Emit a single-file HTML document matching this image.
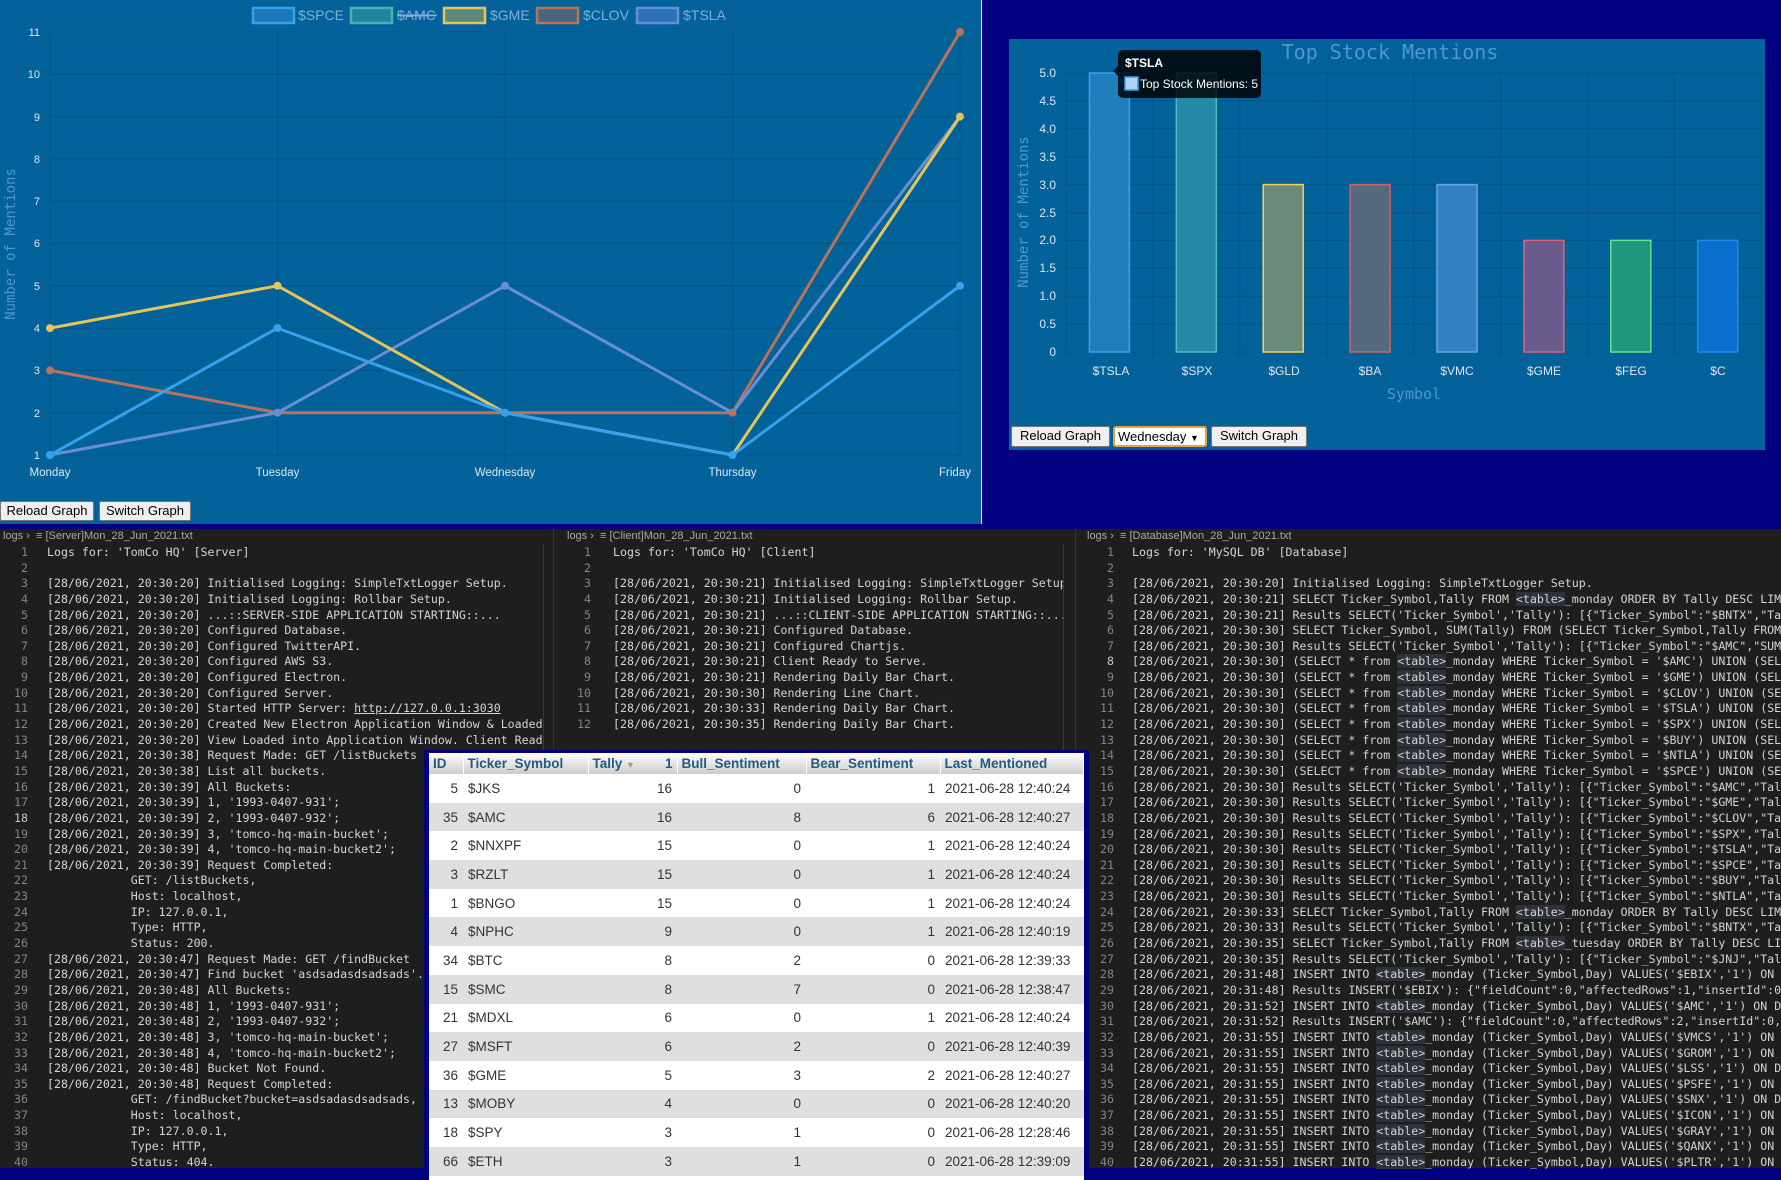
<!DOCTYPE html>
<html><head><meta charset="utf-8">
<style>
*{margin:0;padding:0;box-sizing:border-box}
body{width:1781px;height:1168px;overflow:hidden;background:#000080;position:relative;font-family:"Liberation Sans",sans-serif}
.abs{position:absolute}
.btn{position:absolute;background:#efefef;border:1px solid #767676;border-radius:2px;font:13px "Liberation Sans",sans-serif;color:#000;text-align:center;line-height:18px}
.logs{position:absolute;top:529px;height:639px;background:#1e1e1e;overflow:hidden}
.bc{position:absolute;top:530px;font:11px "Liberation Sans",sans-serif;color:#a9a9a9;white-space:pre}
.gut,.txt{position:absolute;top:545px;font:11.6px "DejaVu Sans Mono",monospace;line-height:15.64px;white-space:pre}
.gut{color:#858585;text-align:right}
.txt{color:#d4d4d4;overflow:hidden}
.tb{background:#2c313a}
table{border-collapse:collapse;font:13.5px "Liberation Sans",sans-serif;color:#333;width:100%}
th{color:#235a81;font-weight:bold;text-align:left;height:21px;padding:0 4px;background:linear-gradient(#fff,#ccc);border-right:1px solid #fff}
td{height:28.7px;padding:0 5px}
tr:nth-child(odd) td{background:#dfdfdf}
tr:nth-child(even) td{background:#fff}
.r{text-align:right}
</style></head><body>

<!-- line chart panel -->
<div class="abs" style="left:0;top:0;width:982px;height:524px;background:#03629a;border-right:1px solid #cfe3f3"></div>
<svg class="abs" style="left:0;top:0" width="1781" height="528" font-family="Liberation Sans, sans-serif">
 <g stroke="rgba(0,0,0,0.13)" stroke-width="1">
  <line x1="50" y1="455" x2="960" y2="455"/><line x1="50" y1="412.7" x2="960" y2="412.7"/><line x1="50" y1="370.4" x2="960" y2="370.4"/><line x1="50" y1="328.1" x2="960" y2="328.1"/><line x1="50" y1="285.8" x2="960" y2="285.8"/><line x1="50" y1="243.5" x2="960" y2="243.5"/><line x1="50" y1="201.2" x2="960" y2="201.2"/><line x1="50" y1="158.9" x2="960" y2="158.9"/><line x1="50" y1="116.6" x2="960" y2="116.6"/><line x1="50" y1="74.3" x2="960" y2="74.3"/><line x1="50" y1="32" x2="960" y2="32"/>
  <line x1="50" y1="32" x2="50" y2="462"/><line x1="277.5" y1="32" x2="277.5" y2="462"/><line x1="505" y1="32" x2="505" y2="462"/><line x1="732.5" y1="32" x2="732.5" y2="462"/><line x1="960" y1="32" x2="960" y2="462"/>
 </g>
 <g fill="#dde6ee" font-size="11" text-anchor="end">
  <text x="40" y="459">1</text><text x="40" y="417">2</text><text x="40" y="374">3</text><text x="40" y="332">4</text><text x="40" y="290">5</text><text x="40" y="247">6</text><text x="40" y="205">7</text><text x="40" y="163">8</text><text x="40" y="121">9</text><text x="40" y="78">10</text><text x="40" y="36">11</text>
 </g>
 <g fill="#dde6ee" font-size="11.5" text-anchor="middle">
  <text x="50" y="476">Monday</text><text x="277.5" y="476">Tuesday</text><text x="505" y="476">Wednesday</text><text x="732.5" y="476">Thursday</text><text x="955" y="476">Friday</text>
 </g>
 <text transform="translate(15,244) rotate(-90)" text-anchor="middle" fill="#4f97cc" font-size="14" font-family="DejaVu Sans Mono, monospace">Number of Mentions</text>
 <!-- legend -->
 <g font-size="14" fill="#7fb0d4">
  <rect x="253" y="8" width="41" height="15" fill="#1d78b8" stroke="#36a2eb" stroke-width="2.5"/><text x="298" y="20">$SPCE</text>
  <rect x="351" y="8" width="41" height="15" fill="#1e849f" stroke="#4bb0b0" stroke-width="2.5"/><text x="397" y="20" text-decoration="line-through">$AMC</text>
  <line x1="397" y1="15" x2="437" y2="15" stroke="#7fb0d4"/>
  <rect x="444" y="8" width="41" height="15" fill="#60887a" stroke="#e6c45a" stroke-width="2.5"/><text x="490" y="20">$GME</text>
  <rect x="537" y="8" width="41" height="15" fill="#4a6479" stroke="#b8735a" stroke-width="2.5"/><text x="583" y="20">$CLOV</text>
  <rect x="637" y="8" width="41" height="15" fill="#2a72b8" stroke="#6a8ed0" stroke-width="2.5"/><text x="683" y="20">$TSLA</text>
 </g>
 <!-- series -->
 <g fill="none" stroke-width="3">
  <polyline stroke="#b8735a" points="50,370.4 277.5,412.7 505,412.7 732.5,412.7 960,32"/>
  <polyline stroke="#6a8ed0" points="50,455 277.5,412.7 505,285.8 732.5,412.7 960,116.6"/>
  <polyline stroke="#e6c45a" points="50,328.1 277.5,285.8 505,412.7 732.5,455 960,116.6"/>
  <polyline stroke="#36a2eb" points="50,455 277.5,328.1 505,412.7 732.5,455 960,285.8"/>
 </g>
 <g stroke-width="2">
  <g fill="#b8735a" stroke="#b8735a"><circle cx="50" cy="370.4" r="3"/><circle cx="277.5" cy="412.7" r="3"/><circle cx="505" cy="412.7" r="3"/><circle cx="732.5" cy="412.7" r="3"/><circle cx="960" cy="32" r="3"/></g>
  <g fill="#6a8ed0" stroke="#6a8ed0"><circle cx="277.5" cy="412.7" r="3"/><circle cx="505" cy="285.8" r="3"/></g>
  <g fill="#e6c45a" stroke="#e6c45a"><circle cx="50" cy="328.1" r="3"/><circle cx="277.5" cy="285.8" r="3"/><circle cx="960" cy="116.6" r="3"/></g>
  <g fill="#36a2eb" stroke="#36a2eb"><circle cx="50" cy="455" r="3"/><circle cx="277.5" cy="328.1" r="3"/><circle cx="505" cy="412.7" r="3"/><circle cx="732.5" cy="455" r="3"/><circle cx="960" cy="285.8" r="3"/></g>
 </g>

 <!-- bar chart panel -->
 <rect x="1009" y="39" width="756" height="411" fill="#03629a"/>
 <g stroke="rgba(0,0,0,0.13)">
  <line x1="1066" y1="73" x2="1761" y2="73"/><line x1="1066" y1="100.9" x2="1761" y2="100.9"/><line x1="1066" y1="128.8" x2="1761" y2="128.8"/><line x1="1066" y1="156.7" x2="1761" y2="156.7"/><line x1="1066" y1="184.6" x2="1761" y2="184.6"/><line x1="1066" y1="212.5" x2="1761" y2="212.5"/><line x1="1066" y1="240.4" x2="1761" y2="240.4"/><line x1="1066" y1="268.3" x2="1761" y2="268.3"/><line x1="1066" y1="296.2" x2="1761" y2="296.2"/><line x1="1066" y1="324.1" x2="1761" y2="324.1"/><line x1="1066" y1="352" x2="1761" y2="352"/>
  <line x1="1066" y1="73" x2="1066" y2="358"/><line x1="1152.9" y1="73" x2="1152.9" y2="358"/><line x1="1239.8" y1="73" x2="1239.8" y2="358"/><line x1="1326.7" y1="73" x2="1326.7" y2="358"/><line x1="1413.6" y1="73" x2="1413.6" y2="358"/><line x1="1500.5" y1="73" x2="1500.5" y2="358"/><line x1="1587.4" y1="73" x2="1587.4" y2="358"/><line x1="1674.3" y1="73" x2="1674.3" y2="358"/><line x1="1761" y1="73" x2="1761" y2="358"/>
 </g>
 <g stroke-width="1.5">
  <rect x="1089.4" y="73" width="40" height="279" fill="#1f7fbd" stroke="#36a2eb"/>
  <rect x="1176.3" y="73" width="40" height="279" fill="#248aa6" stroke="#4bc0c0"/>
  <rect x="1263.2" y="184.6" width="40" height="167.4" fill="#6a8a7b" stroke="#ffcd56"/>
  <rect x="1350.1" y="184.6" width="40" height="167.4" fill="#556a7f" stroke="#c9665f"/>
  <rect x="1437" y="184.6" width="40" height="167.4" fill="#3580c0" stroke="#6aa4e4"/>
  <rect x="1523.9" y="240.4" width="40" height="111.6" fill="#6a5b8d" stroke="#e4607c"/>
  <rect x="1610.8" y="240.4" width="40" height="111.6" fill="#21967e" stroke="#62e28e"/>
  <rect x="1697.7" y="240.4" width="40" height="111.6" fill="#0a6ecc" stroke="#1e8cf0"/>
 </g>
 <g fill="#dde6ee" font-size="12" text-anchor="end">
  <text x="1056" y="77">5.0</text><text x="1056" y="105">4.5</text><text x="1056" y="133">4.0</text><text x="1056" y="161">3.5</text><text x="1056" y="189">3.0</text><text x="1056" y="217">2.5</text><text x="1056" y="244">2.0</text><text x="1056" y="272">1.5</text><text x="1056" y="300">1.0</text><text x="1056" y="328">0.5</text><text x="1056" y="356">0</text>
 </g>
 <g fill="#dde6ee" font-size="12" text-anchor="middle">
  <text x="1111" y="375">$TSLA</text><text x="1197" y="375">$SPX</text><text x="1284" y="375">$GLD</text><text x="1370" y="375">$BA</text><text x="1457" y="375">$VMC</text><text x="1544" y="375">$GME</text><text x="1631" y="375">$FEG</text><text x="1718" y="375">$C</text>
 </g>
 <text x="1414" y="399" text-anchor="middle" fill="#4f97cc" font-size="15" font-family="DejaVu Sans Mono, monospace">Symbol</text>
 <text transform="translate(1028,212) rotate(-90)" text-anchor="middle" fill="#4f97cc" font-size="14" font-family="DejaVu Sans Mono, monospace">Number of Mentions</text>
 <text x="1390" y="59" text-anchor="middle" fill="#4f97cc" font-size="20" font-family="DejaVu Sans Mono, monospace">Top Stock Mentions</text>
 <!-- tooltip -->
 <rect x="1118" y="50" width="143" height="48" rx="5" fill="rgba(0,0,0,0.82)"/>
 <path d="M1118,66 l-5,5 l5,5z" fill="rgba(0,0,0,0.82)"/>
 <text x="1125" y="67" fill="#fff" font-size="12" font-weight="bold">$TSLA</text>
 <rect x="1125" y="77" width="13" height="13" fill="#a8d6f4" stroke="#36a2eb" stroke-width="1.5"/>
 <text x="1140" y="88" fill="#fff" font-size="12">Top Stock Mentions: 5</text>
</svg>

<div class="btn" style="left:0;top:501px;width:94px;height:20px">Reload Graph</div>
<div class="btn" style="left:99px;top:501px;width:92px;height:20px">Switch Graph</div>
<div class="btn" style="left:1011px;top:426px;width:99px;height:21px">Reload Graph</div>
<div class="btn" style="left:1113px;top:426px;width:94px;height:21px;background:#fff;border:2px solid #e8a33a;border-radius:3px;text-align:left;padding-left:3px;line-height:17px">Wednesday <span style="font-size:9px">&#9660;</span></div>
<div class="btn" style="left:1211px;top:426px;width:96px;height:21px">Switch Graph</div>

<!-- logs -->
<div class="logs" style="left:0;width:553px"></div>
<div class="logs" style="left:553px;width:522px;border-left:1px solid #333"></div>
<div class="logs" style="left:1075px;width:706px;border-left:1px solid #333"></div>
<div class="abs" style="left:543px;top:545px;width:1px;height:623px;background:#3a3a3a"></div>
<div class="abs" style="left:1063px;top:545px;width:1px;height:623px;background:#3a3a3a"></div>

<div class="bc" style="left:3px">logs ›  ≡ [Server]Mon_28_Jun_2021.txt</div>
<div class="bc" style="left:567px">logs ›  ≡ [Client]Mon_28_Jun_2021.txt</div>
<div class="bc" style="left:1087px">logs ›  ≡ [Database]Mon_28_Jun_2021.txt</div>

<div class="gut" style="left:0;width:28px">1
2
3
4
5
6
7
8
9
10
11
12
13
14
15
16
17
<span style="color:#c6c6c6">18</span>
19
20
21
22
23
24
25
26
27
28
29
30
31
32
33
34
35
36
37
38
39
40</div>
<div class="txt" style="left:47px;width:496px">Logs for: 'TomCo HQ' [Server]

[28/06/2021, 20:30:20] Initialised Logging: SimpleTxtLogger Setup.
[28/06/2021, 20:30:20] Initialised Logging: Rollbar Setup.
[28/06/2021, 20:30:20] ...::SERVER-SIDE APPLICATION STARTING::...
[28/06/2021, 20:30:20] Configured Database.
[28/06/2021, 20:30:20] Configured TwitterAPI.
[28/06/2021, 20:30:20] Configured AWS S3.
[28/06/2021, 20:30:20] Configured Electron.
[28/06/2021, 20:30:20] Configured Server.
[28/06/2021, 20:30:20] Started HTTP Server: <u>http://127.0.0.1:3030</u>
[28/06/2021, 20:30:20] Created New Electron Application Window &amp; Loaded Scripts.
[28/06/2021, 20:30:20] View Loaded into Application Window. Client Ready.
[28/06/2021, 20:30:38] Request Made: GET /listBuckets
[28/06/2021, 20:30:38] List all buckets.
[28/06/2021, 20:30:39] All Buckets:
[28/06/2021, 20:30:39] 1, '1993-0407-931';
[28/06/2021, 20:30:39] 2, '1993-0407-932';
[28/06/2021, 20:30:39] 3, 'tomco-hq-main-bucket';
[28/06/2021, 20:30:39] 4, 'tomco-hq-main-bucket2';
[28/06/2021, 20:30:39] Request Completed:
            GET: /listBuckets,
            Host: localhost,
            IP: 127.0.0.1,
            Type: HTTP,
            Status: 200.
[28/06/2021, 20:30:47] Request Made: GET /findBucket
[28/06/2021, 20:30:47] Find bucket 'asdsadasdsadsads'.
[28/06/2021, 20:30:48] All Buckets:
[28/06/2021, 20:30:48] 1, '1993-0407-931';
[28/06/2021, 20:30:48] 2, '1993-0407-932';
[28/06/2021, 20:30:48] 3, 'tomco-hq-main-bucket';
[28/06/2021, 20:30:48] 4, 'tomco-hq-main-bucket2';
[28/06/2021, 20:30:48] Bucket Not Found.
[28/06/2021, 20:30:48] Request Completed:
            GET: /findBucket?bucket=asdsadasdsadsads,
            Host: localhost,
            IP: 127.0.0.1,
            Type: HTTP,
            Status: 404.</div>

<div class="gut" style="left:553px;width:38px">1
2
3
4
5
6
7
8
9
10
11
12</div>
<div class="txt" style="left:613px;width:450px">Logs for: 'TomCo HQ' [Client]

[28/06/2021, 20:30:21] Initialised Logging: SimpleTxtLogger Setup.
[28/06/2021, 20:30:21] Initialised Logging: Rollbar Setup.
[28/06/2021, 20:30:21] ...::CLIENT-SIDE APPLICATION STARTING::...
[28/06/2021, 20:30:21] Configured Database.
[28/06/2021, 20:30:21] Configured Chartjs.
[28/06/2021, 20:30:21] Client Ready to Serve.
[28/06/2021, 20:30:21] Rendering Daily Bar Chart.
[28/06/2021, 20:30:30] Rendering Line Chart.
[28/06/2021, 20:30:33] Rendering Daily Bar Chart.
[28/06/2021, 20:30:35] Rendering Daily Bar Chart.</div>

<div class="gut" style="left:1075px;width:39px">1
2
3
4
5
6
7
<span style="color:#c6c6c6">8</span>
9
10
11
12
13
14
15
16
17
18
19
20
21
22
23
24
25
26
27
28
29
30
31
32
33
34
35
36
37
38
39
40</div>
<div class="txt" style="left:1132px;width:649px">Logs for: 'MySQL DB' [Database]

[28/06/2021, 20:30:20] Initialised Logging: SimpleTxtLogger Setup.
[28/06/2021, 20:30:21] SELECT Ticker_Symbol,Tally FROM <span class="tb">&lt;table&gt;</span>_monday ORDER BY Tally DESC LIMIT 8
[28/06/2021, 20:30:21] Results SELECT('Ticker_Symbol','Tally'): [{"Ticker_Symbol":"$BNTX","Tally":5}]
[28/06/2021, 20:30:30] SELECT Ticker_Symbol, SUM(Tally) FROM (SELECT Ticker_Symbol,Tally FROM
[28/06/2021, 20:30:30] Results SELECT('Ticker_Symbol','Tally'): [{"Ticker_Symbol":"$AMC","SUM"
[28/06/2021, 20:30:30] (SELECT * from <span class="tb">&lt;table&gt;</span>_monday WHERE Ticker_Symbol = '$AMC') UNION (SELECT
[28/06/2021, 20:30:30] (SELECT * from <span class="tb">&lt;table&gt;</span>_monday WHERE Ticker_Symbol = '$GME') UNION (SELECT
[28/06/2021, 20:30:30] (SELECT * from <span class="tb">&lt;table&gt;</span>_monday WHERE Ticker_Symbol = '$CLOV') UNION (SELECT
[28/06/2021, 20:30:30] (SELECT * from <span class="tb">&lt;table&gt;</span>_monday WHERE Ticker_Symbol = '$TSLA') UNION (SELECT
[28/06/2021, 20:30:30] (SELECT * from <span class="tb">&lt;table&gt;</span>_monday WHERE Ticker_Symbol = '$SPX') UNION (SELECT
[28/06/2021, 20:30:30] (SELECT * from <span class="tb">&lt;table&gt;</span>_monday WHERE Ticker_Symbol = '$BUY') UNION (SELECT
[28/06/2021, 20:30:30] (SELECT * from <span class="tb">&lt;table&gt;</span>_monday WHERE Ticker_Symbol = '$NTLA') UNION (SELECT
[28/06/2021, 20:30:30] (SELECT * from <span class="tb">&lt;table&gt;</span>_monday WHERE Ticker_Symbol = '$SPCE') UNION (SELECT
[28/06/2021, 20:30:30] Results SELECT('Ticker_Symbol','Tally'): [{"Ticker_Symbol":"$AMC","Tally"
[28/06/2021, 20:30:30] Results SELECT('Ticker_Symbol','Tally'): [{"Ticker_Symbol":"$GME","Tally"
[28/06/2021, 20:30:30] Results SELECT('Ticker_Symbol','Tally'): [{"Ticker_Symbol":"$CLOV","Tally"
[28/06/2021, 20:30:30] Results SELECT('Ticker_Symbol','Tally'): [{"Ticker_Symbol":"$SPX","Tally"
[28/06/2021, 20:30:30] Results SELECT('Ticker_Symbol','Tally'): [{"Ticker_Symbol":"$TSLA","Tally"
[28/06/2021, 20:30:30] Results SELECT('Ticker_Symbol','Tally'): [{"Ticker_Symbol":"$SPCE","Tally"
[28/06/2021, 20:30:30] Results SELECT('Ticker_Symbol','Tally'): [{"Ticker_Symbol":"$BUY","Tally"
[28/06/2021, 20:30:30] Results SELECT('Ticker_Symbol','Tally'): [{"Ticker_Symbol":"$NTLA","Tally"
[28/06/2021, 20:30:33] SELECT Ticker_Symbol,Tally FROM <span class="tb">&lt;table&gt;</span>_monday ORDER BY Tally DESC LIMIT 8
[28/06/2021, 20:30:33] Results SELECT('Ticker_Symbol','Tally'): [{"Ticker_Symbol":"$BNTX","Tally"
[28/06/2021, 20:30:35] SELECT Ticker_Symbol,Tally FROM <span class="tb">&lt;table&gt;</span>_tuesday ORDER BY Tally DESC LIMIT
[28/06/2021, 20:30:35] Results SELECT('Ticker_Symbol','Tally'): [{"Ticker_Symbol":"$JNJ","Tally"
[28/06/2021, 20:31:48] INSERT INTO <span class="tb">&lt;table&gt;</span>_monday (Ticker_Symbol,Day) VALUES('$EBIX','1') ON DUP
[28/06/2021, 20:31:48] Results INSERT('$EBIX'): {"fieldCount":0,"affectedRows":1,"insertId":0,
[28/06/2021, 20:31:52] INSERT INTO <span class="tb">&lt;table&gt;</span>_monday (Ticker_Symbol,Day) VALUES('$AMC','1') ON DUP
[28/06/2021, 20:31:52] Results INSERT('$AMC'): {"fieldCount":0,"affectedRows":2,"insertId":0,
[28/06/2021, 20:31:55] INSERT INTO <span class="tb">&lt;table&gt;</span>_monday (Ticker_Symbol,Day) VALUES('$VMCS','1') ON DUP
[28/06/2021, 20:31:55] INSERT INTO <span class="tb">&lt;table&gt;</span>_monday (Ticker_Symbol,Day) VALUES('$GROM','1') ON DUP
[28/06/2021, 20:31:55] INSERT INTO <span class="tb">&lt;table&gt;</span>_monday (Ticker_Symbol,Day) VALUES('$LSS','1') ON DUP
[28/06/2021, 20:31:55] INSERT INTO <span class="tb">&lt;table&gt;</span>_monday (Ticker_Symbol,Day) VALUES('$PSFE','1') ON DUP
[28/06/2021, 20:31:55] INSERT INTO <span class="tb">&lt;table&gt;</span>_monday (Ticker_Symbol,Day) VALUES('$SNX','1') ON DUP
[28/06/2021, 20:31:55] INSERT INTO <span class="tb">&lt;table&gt;</span>_monday (Ticker_Symbol,Day) VALUES('$ICON','1') ON DUP
[28/06/2021, 20:31:55] INSERT INTO <span class="tb">&lt;table&gt;</span>_monday (Ticker_Symbol,Day) VALUES('$GRAY','1') ON DUP
[28/06/2021, 20:31:55] INSERT INTO <span class="tb">&lt;table&gt;</span>_monday (Ticker_Symbol,Day) VALUES('$QANX','1') ON DUP
[28/06/2021, 20:31:55] INSERT INTO <span class="tb">&lt;table&gt;</span>_monday (Ticker_Symbol,Day) VALUES('$PLTR','1') ON DUP</div>

<!-- table overlay -->
<div class="abs" style="left:424px;top:750px;width:665px;height:430px;background:#000080;padding:3px 0 0 5px;overflow:hidden">
<div style="background:#fff;width:655px;overflow:hidden">
<table>
<colgroup><col style="width:34px"><col style="width:125px"><col style="width:89px"><col style="width:129px"><col style="width:134px"><col></colgroup>
<tr><th>ID</th><th>Ticker_Symbol</th><th>Tally <span style="color:#999;font-size:9px">&#9660;</span> <span style="float:right">1</span></th><th>Bull_Sentiment</th><th>Bear_Sentiment</th><th>Last_Mentioned</th></tr>
<tr><td class="r">5</td><td>$JKS</td><td class="r">16</td><td class="r">0</td><td class="r">1</td><td style="white-space:nowrap">2021-06-28 12:40:24</td></tr>
<tr><td class="r">35</td><td>$AMC</td><td class="r">16</td><td class="r">8</td><td class="r">6</td><td style="white-space:nowrap">2021-06-28 12:40:27</td></tr>
<tr><td class="r">2</td><td>$NNXPF</td><td class="r">15</td><td class="r">0</td><td class="r">1</td><td style="white-space:nowrap">2021-06-28 12:40:24</td></tr>
<tr><td class="r">3</td><td>$RZLT</td><td class="r">15</td><td class="r">0</td><td class="r">1</td><td style="white-space:nowrap">2021-06-28 12:40:24</td></tr>
<tr><td class="r">1</td><td>$BNGO</td><td class="r">15</td><td class="r">0</td><td class="r">1</td><td style="white-space:nowrap">2021-06-28 12:40:24</td></tr>
<tr><td class="r">4</td><td>$NPHC</td><td class="r">9</td><td class="r">0</td><td class="r">1</td><td style="white-space:nowrap">2021-06-28 12:40:19</td></tr>
<tr><td class="r">34</td><td>$BTC</td><td class="r">8</td><td class="r">2</td><td class="r">0</td><td style="white-space:nowrap">2021-06-28 12:39:33</td></tr>
<tr><td class="r">15</td><td>$SMC</td><td class="r">8</td><td class="r">7</td><td class="r">0</td><td style="white-space:nowrap">2021-06-28 12:38:47</td></tr>
<tr><td class="r">21</td><td>$MDXL</td><td class="r">6</td><td class="r">0</td><td class="r">1</td><td style="white-space:nowrap">2021-06-28 12:40:24</td></tr>
<tr><td class="r">27</td><td>$MSFT</td><td class="r">6</td><td class="r">2</td><td class="r">0</td><td style="white-space:nowrap">2021-06-28 12:40:39</td></tr>
<tr><td class="r">36</td><td>$GME</td><td class="r">5</td><td class="r">3</td><td class="r">2</td><td style="white-space:nowrap">2021-06-28 12:40:27</td></tr>
<tr><td class="r">13</td><td>$MOBY</td><td class="r">4</td><td class="r">0</td><td class="r">0</td><td style="white-space:nowrap">2021-06-28 12:40:20</td></tr>
<tr><td class="r">18</td><td>$SPY</td><td class="r">3</td><td class="r">1</td><td class="r">0</td><td style="white-space:nowrap">2021-06-28 12:28:46</td></tr>
<tr><td class="r">66</td><td>$ETH</td><td class="r">3</td><td class="r">1</td><td class="r">0</td><td style="white-space:nowrap">2021-06-28 12:39:09</td></tr>
<tr><td class="r">7</td><td>$CLOV</td><td class="r">3</td><td class="r">1</td><td class="r">0</td><td style="white-space:nowrap">2021-06-28 12:40:11</td></tr>
</table>
</div></div>
</body></html>
